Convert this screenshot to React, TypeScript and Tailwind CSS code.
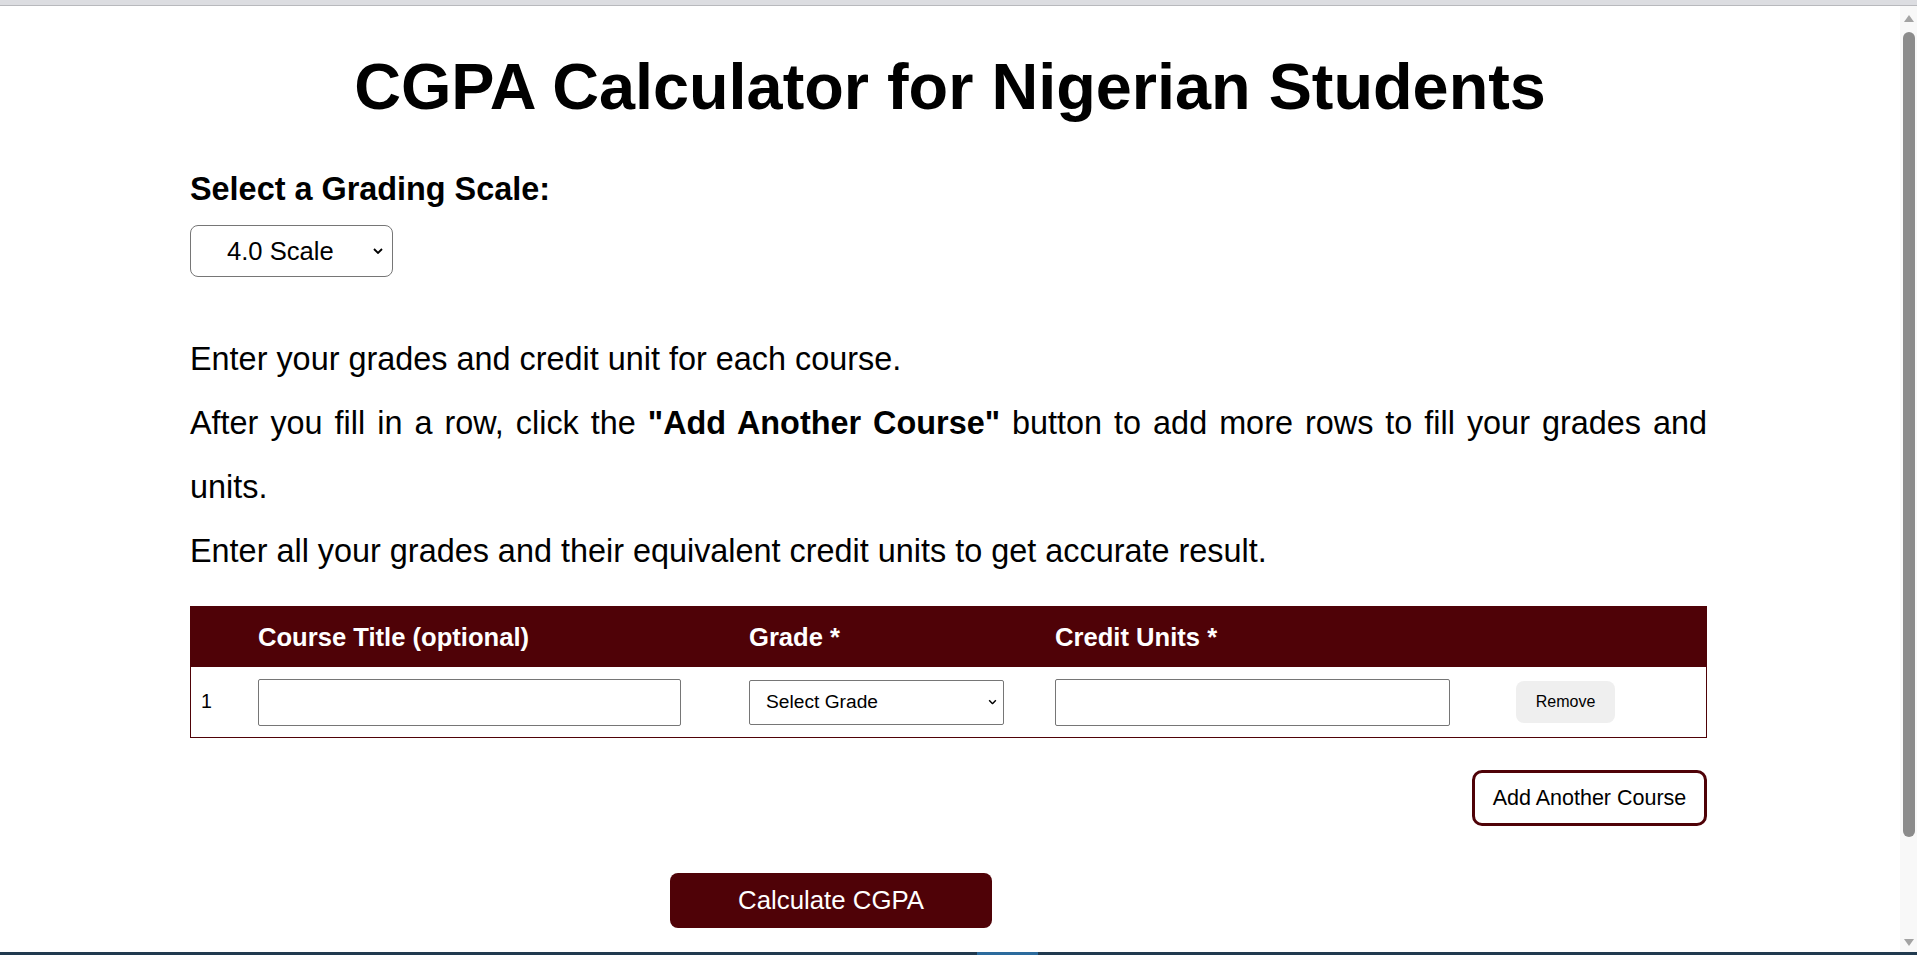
import { useState } from "react";

type Course = { id: number; title: string; grade: string; units: string };

const gradeOptions: Record<string, string[]> = {
  "4.0": ["A", "B", "C", "D", "E", "F"],
  "5.0": ["A", "B", "C", "D", "E", "F"],
};

const Chevron = ({ className }: { className?: string }) => (
  <svg viewBox="0 0 10 6" className={className} fill="none" stroke="currentColor" strokeWidth={1.8}>
    <path d="M1 1l4 4 4-4" />
  </svg>
);

const Triangle = ({ down }: { down?: boolean }) => (
  <svg viewBox="0 0 10 7" className="w-[10px] h-[7px] fill-[#a3a3a3]">
    <polygon points={down ? "0,0 10,0 5,7" : "5,0 10,7 0,7"} />
  </svg>
);

export default function App() {
  const [scale, setScale] = useState("4.0");
  const [courses, setCourses] = useState<Course[]>([{ id: 1, title: "", grade: "", units: "" }]);

  const addCourse = () =>
    setCourses((c) => [...c, { id: Date.now(), title: "", grade: "", units: "" }]);

  const removeCourse = (id: number) => setCourses((c) => c.filter((x) => x.id !== id));

  const update = (id: number, key: keyof Course, value: string) =>
    setCourses((c) => c.map((x) => (x.id === id ? { ...x, [key]: value } : x)));

  return (
    <div className="h-screen flex flex-col overflow-hidden bg-white text-black font-['Liberation_Sans',Arial,sans-serif]">
      {/* browser top edge */}
      <div className="h-[5px] bg-[#dcdde1] shrink-0" />
      <div className="h-px bg-[#b8b9bd] shrink-0" />

      <div className="flex flex-1 min-h-0">
        <main className="flex-1 overflow-hidden">
          <h1 className="mt-[44px] text-center text-[64.8px] leading-[74px] font-bold">
            CGPA Calculator for Nigerian Students
          </h1>

          <div className="ml-[190px] w-[1517px]">
            <label className="block mt-[47px] text-[32.4px] leading-[37px] font-bold">
              Select a Grading Scale:
            </label>
            <div className="relative w-fit mt-[17px]">
              <select
                value={scale}
                onChange={(e) => setScale(e.target.value)}
                className="appearance-none block w-[203px] h-[52px] rounded-[8px] border border-[#767676] bg-white text-[25.6px] pl-[36px] pr-[28px]"
              >
                <option value="4.0">4.0 Scale</option>
                <option value="5.0">5.0 Scale</option>
              </select>
              <Chevron className="absolute right-[10px] top-1/2 -translate-y-1/2 w-[10px] h-[6px] pointer-events-none" />
            </div>

            <div className="mt-[50px] text-[32.4px] leading-[64px]">
              <p>Enter your grades and credit unit for each course.</p>
              <p className="text-justify">
                After you fill in a row, click the <strong>"Add Another Course"</strong> button to add
                more rows to fill your grades and units.
              </p>
              <p>Enter all your grades and their equivalent credit units to get accurate result.</p>
            </div>

            <div className="mt-[23px] border border-[#4f0207]">
              <div className="grid grid-cols-[57px_491px_306px_461px_200px] h-[60px] items-center bg-[#4f0207] text-white font-bold text-[25.6px]">
                <div className="pl-[10px]" />
                <div className="pl-[10px]">Course Title (optional)</div>
                <div className="pl-[10px]">Grade *</div>
                <div className="pl-[10px]">Credit Units *</div>
                <div className="pl-[10px]" />
              </div>
              {courses.map((c, i) => (
                <div
                  key={c.id}
                  className="grid grid-cols-[57px_491px_306px_461px_200px] h-[70px] items-center text-[19.6px]"
                >
                  <div className="pl-[10px]">{i + 1}</div>
                  <div className="pl-[10px]">
                    <input
                      value={c.title}
                      onChange={(e) => update(c.id, "title", e.target.value)}
                      className="block w-[423px] h-[47px] border border-[#767676] rounded-[2px] px-2"
                    />
                  </div>
                  <div className="pl-[10px]">
                    <div className="relative w-fit">
                      <select
                        value={c.grade}
                        onChange={(e) => update(c.id, "grade", e.target.value)}
                        className="appearance-none block w-[255px] h-[45px] border border-[#767676] rounded-[2px] bg-white text-[19.2px] pl-[16px] pr-[24px]"
                      >
                        <option value="">Select Grade</option>
                        {gradeOptions[scale].map((g) => (
                          <option key={g} value={g}>
                            {g}
                          </option>
                        ))}
                      </select>
                      <Chevron className="absolute right-[7px] top-1/2 -translate-y-1/2 w-[9px] h-[5px] pointer-events-none" />
                    </div>
                  </div>
                  <div className="pl-[10px]">
                    <input
                      value={c.units}
                      onChange={(e) => update(c.id, "units", e.target.value)}
                      className="block w-[395px] h-[47px] border border-[#767676] rounded-[2px] px-2"
                    />
                  </div>
                  <div className="pl-[10px]">
                    <button
                      onClick={() => removeCourse(c.id)}
                      className="w-[99px] h-[42px] rounded-[8px] bg-[#efefef] text-[16px]"
                    >
                      Remove
                    </button>
                  </div>
                </div>
              ))}
            </div>

            <div className="flex justify-end mt-[32px]">
              <button
                onClick={addCourse}
                className="w-[235px] h-[56px] border-[3px] border-[#4f0207] rounded-[10px] bg-white text-[21.5px]"
              >
                Add Another Course
              </button>
            </div>

            <div className="flex justify-center pr-[235px] mt-[47px]">
              <button className="w-[322px] h-[55px] rounded-[8px] bg-[#4f0207] text-white text-[25.8px]">
                Calculate CGPA
              </button>
            </div>
          </div>
        </main>

        {/* page scrollbar */}
        <div className="w-[17px] shrink-0 bg-[#f8f8f8] flex flex-col items-center">
          <div className="mt-[9px]">
            <Triangle />
          </div>
          <div className="mt-[10px] w-[12px] h-[805px] rounded-full bg-[#8b8b8b]" />
          <div className="flex-1" />
          <div className="mb-[6px]">
            <Triangle down />
          </div>
        </div>
      </div>

      {/* taskbar edge */}
      <div className="h-[3px] shrink-0 bg-[#213a4f] flex">
        <div className="ml-[977px] w-[61px] bg-[#2c6b9d]" />
      </div>
    </div>
  );
}
